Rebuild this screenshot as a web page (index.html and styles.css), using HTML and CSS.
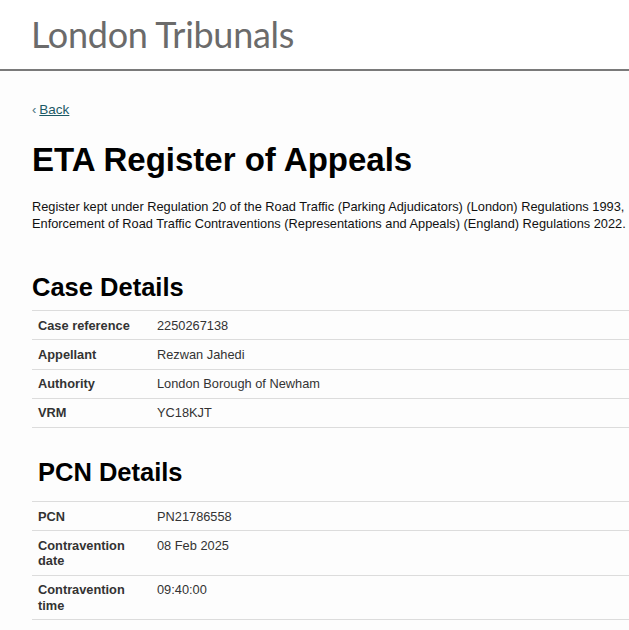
FILE: index.html
```html
<!DOCTYPE html>
<html lang="en">
<head>
<meta charset="utf-8">
<title>ETA Register of Appeals - London Tribunals</title>
<link rel="stylesheet" href="styles.css">
</head>
<body>
<header class="site-header">
  <div class="brand">London Tribunals</div>
</header>
<main class="page">
  <nav class="back"><span class="chev">‹</span><a href="#" class="back-link">Back</a></nav>
  <h1 class="title">ETA Register of Appeals</h1>
  <p class="intro">Register kept under Regulation 20 of the Road Traffic (Parking Adjudicators) (London) Regulations 1993,<br>Enforcement of Road Traffic Contraventions (Representations and Appeals) (England) Regulations 2022.</p>

  <section class="block">
    <h2 class="block-title">Case Details</h2>
    <table class="details">
      <tr><th>Case reference</th><td>2250267138</td></tr>
      <tr><th>Appellant</th><td>Rezwan Jahedi</td></tr>
      <tr><th>Authority</th><td>London Borough of Newham</td></tr>
      <tr><th>VRM</th><td>YC18KJT</td></tr>
    </table>
  </section>

  <section class="block block-pcn">
    <h2 class="block-title indent">PCN Details</h2>
    <table class="details">
      <tr><th>PCN</th><td>PN21786558</td></tr>
      <tr><th>Contravention date</th><td>08 Feb 2025</td></tr>
      <tr><th>Contravention time</th><td>09:40:00</td></tr>
      <tr><th>Contravention location</th><td>Canon Road</td></tr>
    </table>
  </section>
</main>
</body>
</html>
```
FILE: styles.css
```css
html, body {
  margin: 0;
  padding: 0;
}
body {
  background: #fdfdfd;
  font-family: "Liberation Sans", Arial, sans-serif;
  color: #000;
  overflow-x: hidden;
}
.site-header {
  background: #fff;
  height: 69px;
  border-bottom: 2px solid #7a7a7a;
  box-sizing: content-box;
  padding-left: 31px;
}
.brand {
  font-family: Lato, sans-serif;
  font-weight: 400;
  font-size: 36px;
  line-height: 68px;
  letter-spacing: -0.3px;
  color: #6b6b6b;
}
.page {
  width: 960px;
  padding-left: 32px;
}
.back {
  margin-top: 31px;
  font-size: 13.5px;
  line-height: 16px;
  display: flex;
  align-items: baseline;
  gap: 3px;
}
.chev {
  color: #4a7680;
  font-size: 13px;
}
.back-link {
  color: #1b5a66;
  text-decoration: underline;
}
.title {
  font-size: 33px;
  font-weight: bold;
  line-height: 40px;
  margin: 22px 0 0 0;
}
.intro {
  font-size: 12.8px;
  line-height: 17px;
  margin: 18px 0 0 0;
  color: #111;
}
.block {
  margin-top: 40px;
}
.block-pcn {
  margin-top: 29px;
}
.block-title {
  font-size: 25.5px;
  font-weight: bold;
  line-height: 30px;
  margin: 0 0 8px 0;
}
.indent {
  padding-left: 6px;
  margin-bottom: 14px;
}
.details {
  border-collapse: collapse;
  width: 100%;
  font-size: 12.8px;
  line-height: 15.25px;
}
.details tr {
  border-top: 1px solid #dcdcdc;
  border-bottom: 1px solid #dcdcdc;
}
.details th,
.details td {
  padding: 6.5px 6px;
  text-align: left;
  vertical-align: top;
}
.details th {
  width: 107px;
  font-weight: bold;
  color: #333;
}
.details td {
  color: #333;
}
```
